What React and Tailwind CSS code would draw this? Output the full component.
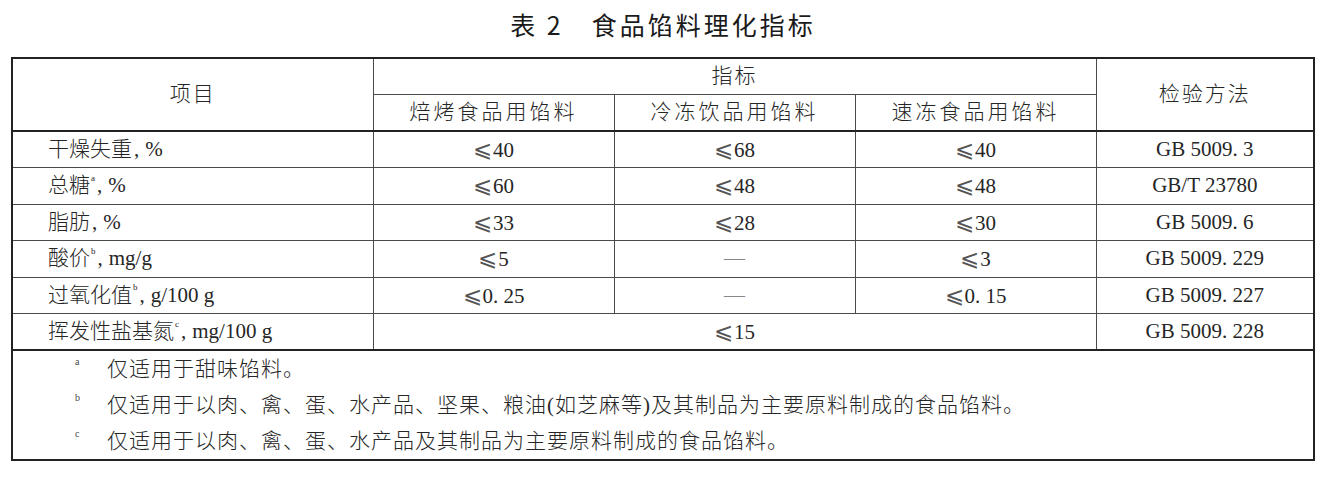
const serif = "font-['Liberation_Serif','DejaVu_Serif','Noto_Sans_CJK_SC',serif]";

const rows = [
  { name: "干燥失重", sup: null, unit: "%", v: ["40", "68", "40"], m: "GB 5009. 3" },
  { name: "总糖", sup: "a", unit: "%", v: ["60", "48", "48"], m: "GB/T 23780" },
  { name: "脂肪", sup: null, unit: "%", v: ["33", "28", "30"], m: "GB 5009. 6" },
  { name: "酸价", sup: "b", unit: "mg/g", v: ["5", null, "3"], m: "GB 5009. 229" },
  { name: "过氧化值", sup: "b", unit: "g/100 g", v: ["0. 25", null, "0. 15"], m: "GB 5009. 227" },
];

const notes = [
  ["a", "仅适用于甜味馅料。"],
  ["b", "仅适用于以肉、禽、蛋、水产品、坚果、粮油(如芝麻等)及其制品为主要原料制成的食品馅料。"],
  ["c", "仅适用于以肉、禽、蛋、水产品及其制品为主要原料制成的食品馅料。"],
];

function Le({ v }) {
  if (v === null) return <span className="text-[#888]">—</span>;
  return (
    <span>
      <span className="text-[23px] text-[#555] mr-[1px]">⩽</span>
      {v}
    </span>
  );
}

function Label({ name, sup, unit }) {
  return (
    <span>
      <span className="font-light">{name}</span>
      {sup && <sup className="text-[9px] align-[7px] ml-[1px]">{sup}</sup>}
      <span className="ml-[2px] mr-[6px]">,</span>
      {unit}
    </span>
  );
}

export default function App() {
  const cell = "border border-[#4a4a4a] text-center";
  const thick = "border-b-2 border-b-[#222]";
  return (
    <div className={`w-[1328px] h-[478px] bg-white text-[#262626] ${serif} text-[21px]`}>
      <div className="h-[46px] flex items-center justify-center pt-1 font-['Noto_Sans_CJK_SC',sans-serif] text-[25px] text-[#1a1a1a] pr-[2px]">
        <span className="tracking-[3px]">表 2</span>
        <span className="ml-[28px] tracking-[3px]">食品馅料理化指标</span>
      </div>
      <div className="pl-[11px] pt-[11px]">
        <table className="table-fixed border-collapse border-2 border-[#222] w-[1302px] leading-none">
          <colgroup>
            <col className="w-[361px]" />
            <col className="w-[241px]" />
            <col className="w-[241px]" />
            <col className="w-[241px]" />
            <col className="w-[218px]" />
          </colgroup>
          <tbody>
            <tr className="h-[36px] font-light">
              <td rowSpan={2} className={`${cell} ${thick} tracking-[2px]`}>项目</td>
              <td colSpan={3} className={`${cell} tracking-[2px]`}>指标</td>
              <td rowSpan={2} className={`${cell} ${thick} tracking-[2px]`}>检验方法</td>
            </tr>
            <tr className="h-[37px] font-light">
              {["焙烤食品用馅料", "冷冻饮品用馅料", "速冻食品用馅料"].map((t) => (
                <td key={t} className={`${cell} ${thick} tracking-[3px]`}>{t}</td>
              ))}
            </tr>
            {rows.map((r) => (
              <tr key={r.m} className="h-[36.5px]">
                <td className="border border-[#4a4a4a] pl-[35px]">
                  <Label name={r.name} sup={r.sup} unit={r.unit} />
                </td>
                {r.v.map((v, i) => (
                  <td key={i} className={cell}><Le v={v} /></td>
                ))}
                <td className={cell}>{r.m}</td>
              </tr>
            ))}
            <tr className="h-[36.5px]">
              <td className={`border border-[#4a4a4a] ${thick} pl-[35px]`}>
                <Label name="挥发性盐基氮" sup="c" unit="mg/100 g" />
              </td>
              <td colSpan={3} className={`${cell} ${thick}`}><Le v="15" /></td>
              <td className={`${cell} ${thick}`}>GB 5009. 228</td>
            </tr>
            <tr>
              <td colSpan={5} className="py-0">
                {notes.map(([s, t]) => (
                  <div key={s} className="flex items-center h-[36px] pl-[62px]">
                    <span className="w-[32px] text-[10px] -mt-[14px] text-[#444]">{s}</span>
                    <span className="font-light tracking-[1px]">{t}</span>
                  </div>
                ))}
              </td>
            </tr>
          </tbody>
        </table>
      </div>
    </div>
  );
}
